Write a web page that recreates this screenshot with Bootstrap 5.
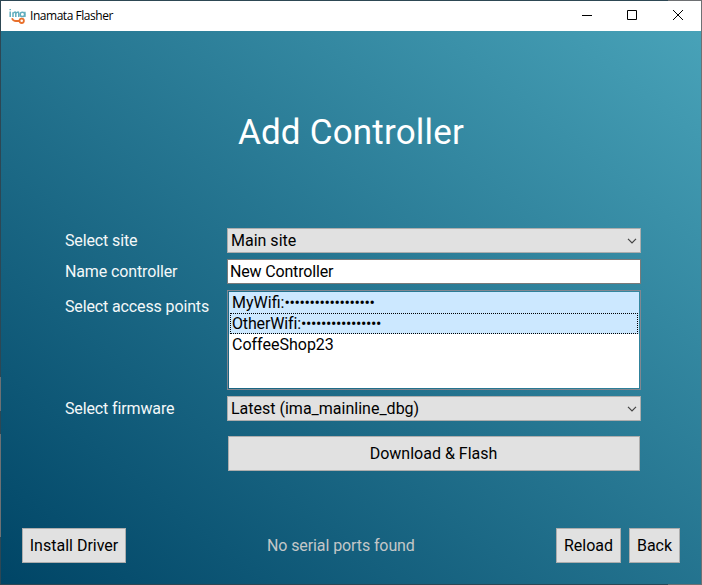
<!DOCTYPE html>
<html lang="en">
<head>
<meta charset="utf-8">
<meta name="viewport" content="width=device-width, initial-scale=1">
<title>Inamata Flasher</title>
<link href="https://cdn.jsdelivr.net/npm/bootstrap@5.3.0/dist/css/bootstrap.min.css" rel="stylesheet">
<style>
  html, body { height: 100%; }
  body { font: 16px/20px Roboto, "Liberation Sans", sans-serif; overflow: hidden; }
  .app-window {
    height: 585px; padding: 1px;
    background:
      linear-gradient(#6e7073, #6e7073) right / 1px 100% no-repeat,
      linear-gradient(to right, #2d4754 668px, #6e7073 668px) top / 100% 1px no-repeat,
      linear-gradient(to right, #2d4754 668px, #6e7073 668px) bottom / 100% 1px no-repeat,
      linear-gradient(#2d4754 377px, #6e7073 377px 411px, #2d4754 411px 434px, #6e7073 434px 537px, #2d4754 537px) left / 1px 100% no-repeat;
  }
  .title-bar { height: 30px; background: #fff; color: #000; font: 12px/30px "Open Sans", "Noto Sans", sans-serif; letter-spacing: -.46px; padding-left: 8px; }
  .caption-btn { width: 46px; height: 28px; border: 0; padding: 0; background: none; }
  .scene { background: linear-gradient(to top right, #004566, #48a2b8); color: #fff; }
  h1.page-heading { font-size: 35px; line-height: 44px; font-weight: 400; margin: 80px 0 73px; letter-spacing: .2px; }
  .form-lines { display: grid; grid-template-columns: 162px 414px; margin-left: 64px; row-gap: 6px; }
  .form-lines label { line-height: 25px; color: #f4f8f9; letter-spacing: -.13px; }
  .field-box { height: 25px; border: 1px solid #adadad; border-radius: 0; background: #e1e1e1; color: #000; line-height: 23px; padding: 0 3px; }
  .name-box { background: #fff; border-color: #7a7a7a; padding: 0 2px; letter-spacing: -.17px; }
  .ap-list { height: 100px; border: 1px solid #828790; padding: 1px; }
  .ap-inner { background: #fff; height: 96px; color: #000; }
  .ap-inner li { height: 21px; line-height: 21px; padding-left: 3px; }
  .ap-inner .picked { background: #cce8ff; }
  .ap-inner .current { border: 1px dotted #000; line-height: 20px; padding-left: 1px; margin: 0 1px; box-shadow: -1px 0 #cce8ff, 1px 0 #cce8ff; letter-spacing: -.15px; }
  .ap-inner .dots { letter-spacing: -.39px; }
  .push { height: 35px; border: 1px solid #adadad; border-radius: 0; background: #e1e1e1; color: #000; padding: 0; line-height: 33px; font-size: 16px; }
  .push-flash { width: 412px; margin: 9px 1px 0; padding-right: 1px; }
  .foot { padding: 0 21px; margin-bottom: 21px; }
  .w-install { width: 104px; } .w-reload { width: 65px; } .w-back { width: 51px; }
  .port-status { color: #c3c7c8; margin-left: 141px; line-height: 35px; letter-spacing: -.1px; }
</style>
<script src="https://cdn.jsdelivr.net/npm/bootstrap@5.3.0/dist/js/bootstrap.bundle.min.js"></script>
</head>
<body>
<div class="app-window d-flex flex-column">
  <header class="title-bar d-flex align-items-center">
    <svg width="17" height="17" viewBox="0 0 17 17" fill="none" stroke-width="1.5" class="me-1">
      <g stroke="#62adbd"><path d="M1.2 3.500V9M1.200 1V2.200M4 9V4.200M4 5.500Q6.800 2.500 6.800 5.500V9M6.800 5.500Q9.800 2.500 9.800 5.500V9"/><circle cx="13.4" cy="6.4" r="2.2"/><path d="M15.9 3.700V9"/></g>
      <g stroke="#e8702c" stroke-width="1.8"><path d="M3 10.200Q4 13 7 13H10"/><circle cx="12.7" cy="12.8" r="2.2"/></g>
    </svg>
    <span>Inamata Flasher</span>
    <div class="d-flex ms-auto align-self-start">
      <button class="caption-btn" aria-label="Minimize"><svg class="d-block mx-auto" width="12" height="12" stroke="#000"><path d="M2 6.500H12"/></svg></button>
      <button class="caption-btn" aria-label="Maximize"><svg class="d-block mx-auto" width="12" height="12" fill="none" stroke="#000"><path d="M1.500 1.500H10.500V10.500H1.500Z"/></svg></button>
      <button class="caption-btn" aria-label="Close"><svg class="d-block mx-auto" width="12" height="12" stroke="#000"><path d="M1 1L11 11M11 1L1 11"/></svg></button>
    </div>
  </header>
  <main class="scene flex-grow-1 d-flex flex-column">
    <h1 class="page-heading text-center">Add Controller</h1>
    <form class="form-lines">
      <label>Select site</label>
      <div class="field-box d-flex justify-content-between align-items-center"><span>Main site</span><svg width="10" height="6" fill="none" stroke="#444" stroke-width="1.2"><path d="M1 .8L5 4.800L9 .8"/></svg></div>
      <label>Name controller</label>
      <div class="field-box name-box">New Controller</div>
      <label class="pt-1">Select access points</label>
      <div class="ap-list"><ul class="ap-inner list-unstyled mb-0">
        <li class="picked">MyWifi:<span class="dots">••••••••••••••••••</span></li>
        <li class="picked current">OtherWifi:<span class="dots">••••••••••••••••</span></li>
        <li>CoffeeShop23</li>
      </ul></div>
      <label>Select firmware</label>
      <div class="field-box d-flex justify-content-between align-items-center"><span>Latest (ima_mainline_dbg)</span><svg width="10" height="6" fill="none" stroke="#444" stroke-width="1.2"><path d="M1 .8L5 4.800L9 .8"/></svg></div>
      <span></span>
      <button type="button" class="btn push push-flash">Download &amp; Flash</button>
    </form>
    <footer class="foot d-flex mt-auto">
      <button class="btn push w-install">Install Driver</button>
      <span class="port-status">No serial ports found</span>
      <div class="d-flex gap-2 ms-auto">
        <button class="btn push w-reload">Reload</button>
        <button class="btn push w-back">Back</button>
      </div>
    </footer>
  </main>
</div>
</body>
</html>
